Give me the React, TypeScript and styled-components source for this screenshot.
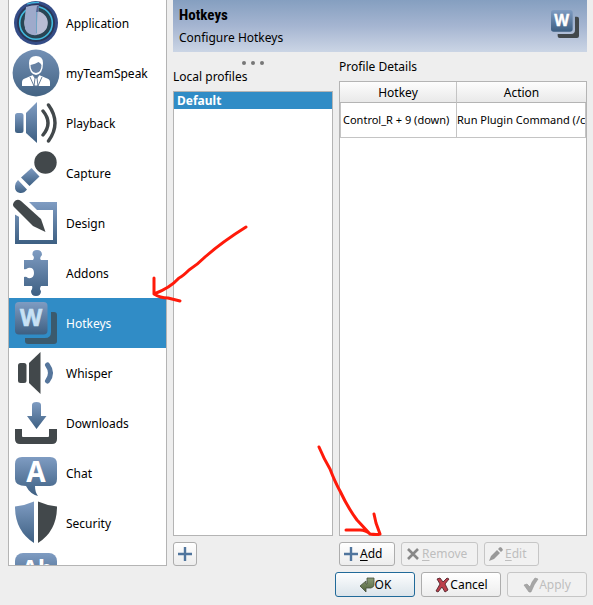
import React from "react";
import styled, { createGlobalStyle, css } from "styled-components";

const GlobalStyle = createGlobalStyle`
  *, *::before, *::after { box-sizing: border-box; }
  body {
    margin: 0;
    background: #eeeeee;
    color: #000000;
    font: 12px/18px "Noto Sans", sans-serif;
    overflow: hidden;
  }
  button { font: inherit; color: inherit; }
`;

const Dialog = styled.div`
  position: relative;
  display: flex;
  flex-direction: column;
  gap: 6px;
  height: 100vh;
  padding: 0 6px 8px 8px;
`;

const Body = styled.div`
  display: flex;
  flex: 1;
  gap: 6px;
  min-height: 0;
`;

const Sidebar = styled.nav`
  flex: 0 0 159px;
  overflow: hidden;
  background: #ffffff;
  border: 1px solid #b4b4b4;
  border-top: 0;
`;

const NavList = styled.ul`
  list-style: none;
  margin: -2px 0 0;
  padding: 0;
`;

const NavButton = styled.button<{ $active?: boolean }>`
  display: flex;
  align-items: center;
  gap: 6px;
  width: 100%;
  height: 50px;
  padding: 0 3px;
  border: 0;
  text-align: left;
  background: ${(p) => (p.$active ? "#308cc6" : "transparent")};
  color: ${(p) => (p.$active ? "#ffffff" : "#000000")};
`;

const NavLabel = styled.span`
  padding-top: 2px;
`;

const NavIcon = styled.svg`
  flex: none;
  width: 48px;
  height: 48px;
`;

const Main = styled.main`
  display: flex;
  flex-direction: column;
  flex: 1;
  min-width: 0;
`;

const Banner = styled.header`
  display: flex;
  justify-content: space-between;
  height: 52px;
  padding: 4px 6px;
  background: linear-gradient(#859fc0, #a5b5d1 50%, #cbd5e5);
`;

const Title = styled.h1`
  margin: 0;
  font: bold 15px/22px "Roboto Condensed", Roboto, sans-serif;
`;

const Subtitle = styled.p`
  margin: 3px 0 0;
`;

const BannerIcon = styled.svg`
  width: 32px;
  height: 32px;
  margin-top: 4px;
`;

const Panels = styled.div`
  display: flex;
  flex: 1;
  gap: 6px;
  min-height: 0;
`;

const Profiles = styled.section`
  display: flex;
  flex-direction: column;
  flex: 0 0 160px;
`;

const Details = styled.section`
  display: flex;
  flex-direction: column;
  flex: 1;
  min-width: 0;
  padding-top: 6px;
`;

const Handle = styled.svg`
  align-self: center;
  width: 24px;
  height: 6px;
  margin: 8px 0 2px;
`;

const PanelLabel = styled.h2`
  margin: 0 0 5px;
  font: inherit;
`;

const ProfileList = styled.ul`
  flex: 1;
  margin: 0 0 6px;
  padding: 0;
  list-style: none;
  background: #ffffff;
  border: 1px solid #b4b4b4;
`;

const ProfileItem = styled.button`
  display: block;
  width: 100%;
  height: 17px;
  padding: 0 3px;
  border: 0;
  background: #308cc6;
  color: #ffffff;
  font-weight: bold;
  line-height: 17px;
  text-align: left;
`;

const TableFrame = styled.div`
  flex: 1;
  min-height: 0;
  margin-bottom: 6px;
  overflow: hidden;
  background: #ffffff;
  border: 1px solid #b4b4b4;
`;

const Table = styled.table`
  width: 100%;
  table-layout: fixed;
  border-collapse: separate;
  border-spacing: 0;
  white-space: nowrap;
`;

const HeadCell = styled.th`
  height: 21px;
  padding: 2px 0 0;
  font-weight: normal;
  background: linear-gradient(#fdfdfd, #e9e9e9);
  border-bottom: 1px solid #b4b4b4;
  &:first-child { width: 117px; border-right: 1px solid #c4c4c4; }
`;

const Cell = styled.td`
  height: 35px;
  padding: 0;
  overflow: hidden;
  font-size: 11px;
  border-right: 1px solid #c4c4c4;
  border-bottom: 1px solid #c4c4c4;
  &:first-child { padding-left: 2px; border-left: 1px solid #c4c4c4; }
`;

const Actions = styled.div`
  display: flex;
  gap: 6px;
`;

const Footer = styled(Actions)`
  justify-content: flex-end;
`;

const ActionButton = styled.button<{ $width: number; $dialog?: boolean; $primary?: boolean }>`
  display: flex;
  align-items: center;
  gap: 1px;
  width: ${(p) => p.$width}px;
  height: 24px;
  padding: 0 3px;
  border: 1px solid #adadad;
  border-radius: 3px;
  background: linear-gradient(#ffffff, #ededed);
  white-space: nowrap;
  ${(p) => p.$dialog && css`
    justify-content: center;
    gap: 0;
    height: 25px;
  `}
  ${(p) => p.$primary && css`
    border-color: #216a99;
    background: linear-gradient(#fcfdfe, #dbe4ea);
  `}
  &:disabled {
    color: #bebebe;
    border-color: #c6c6c6;
    background: #f1f1f1;
  }
`;

const Mnemonic = styled.span`
  text-decoration: underline;
  text-underline-offset: 2px;
`;

const ButtonIcon = styled.svg`
  flex: none;
  width: 16px;
  height: 16px;
`;

const Annotation = styled.svg<{ $x: number; $y: number }>`
  position: absolute;
  left: ${(p) => p.$x}px;
  top: ${(p) => p.$y}px;
  pointer-events: none;
  fill: none;
  stroke: #ff1a0a;
  stroke-width: 3;
  stroke-linecap: round;
  stroke-linejoin: round;
`;

const BLUE = "url(#steel)";
const DARK = "#42484b";

const Gradients = () => (
  <defs>
    <linearGradient id="steel" x1="0" y1="0" x2="0" y2="1">
      <stop offset="0" stopColor="#7f9cc2" />
      <stop offset="1" stopColor="#3d5f82" />
    </linearGradient>
    <linearGradient id="disc" x1="0" y1="0" x2="0" y2="1">
      <stop offset="0" stopColor="#7390b5" />
      <stop offset="1" stopColor="#436383" />
    </linearGradient>
    <linearGradient id="leaf" x1="0" y1="0" x2="0" y2="1">
      <stop offset="0" stopColor="#8c9c77" />
      <stop offset="1" stopColor="#4e623b" />
    </linearGradient>
  </defs>
);

const KeyDrawing = ({ back = DARK, letter = "#ffffff" }) => (
  <>
    <path d="M39 13h3q3 0 3 3v26q0 3-3 3H16q-3 0-3-3v-3h20q6 0 6-6z" fill={back} />
    <rect x="3" y="3" width="32.500" height="32.500" rx="4" fill={BLUE} />
    <text x="19" y="27" textAnchor="middle" fontFamily="Noto Sans, sans-serif" fontWeight="700" fontSize="23" fill={letter} stroke={letter} strokeWidth=".6">W</text>
  </>
);

const drawings: Record<string, React.ReactNode> = {
  Application: (
    <>
      <circle cx="24" cy="24" r="22" fill="#344c86" />
      <circle cx="24" cy="24" r="19" fill="#2a3656" />
      <circle cx="24" cy="24" r="16.3" fill="#294554" stroke="#42bce0" strokeWidth="1.6" />
      <circle cx="24" cy="24" r="11.8" fill="#b8bdd4" />
      <path d="M14 8q5-2 13-2l-2 18v12q-9 1-12-6-1-11 1-22z" fill="#9eaacb" />
      <path d="M25 7l2-1-1 7h-2z" fill="#536492" />
      <path d="M24.5 13v21" stroke="#70a4c4" />
      <path d="M15 5q6-2 12-1.5" fill="none" stroke="#42bce0" strokeWidth="1.2" />
    </>
  ),
  myTeamSpeak: (
    <>
      <circle cx="24" cy="24" r="23.4" fill="url(#disc)" />
      <path d="M10 37v-4q0-3 4-4l7-3 3 4 3-4 7 3q4 1 4 4v4z" fill="#fff" />
      <path d="M21 26l2 3-1 8h4l-1-8 2-3M18 28l4 9M30 28l-4 9" fill="none" stroke="#55718f" strokeWidth=".9" />
      <path d="M17 14q0-7 7-7t7 7q0 11-7 12-7-1-7-12z" fill="#fff" />
      <path d="M18.500 16q5-1 8-3 2 1 3 3 0 7-5.500 8-5.500-1-5.500-8z" fill="#6681a3" />
    </>
  ),
  Playback: (
    <>
      <rect x="3" y="14" width="8.500" height="20" rx="2.500" fill={BLUE} />
      <path d="M14 14L25 3v41L14 34z" fill={BLUE} />
      <path d="M31 12q10 12 0 24M36.500 6q13 18 0 36" fill="none" stroke={DARK} strokeWidth="3.400" strokeLinecap="round" />
    </>
  ),
  Capture: (
    <>
      <circle cx="33.500" cy="13.500" r="11.200" fill={DARK} />
      <path d="M19.500 19l8 8.500L17.500 37l-8.500-8.500z" fill={BLUE} />
      <path d="M6 31l9 9.500q-3 4-7 3.500-5.500-1-5-7 0-3 3-6z" fill={BLUE} />
    </>
  ),
  Design: (
    <>
      <path fillRule="evenodd" d="M3 3h42v42H3zM7 11v30h34V11z" fill={BLUE} />
      <path d="M2 2h14l15 15v12l-8-2L2 15z" fill="#fff" />
      <path d="M2 3q3-4 7-1l20 18 4.500 13-12.500-6L2 8q-2-2 0-5z" fill={DARK} />
    </>
  ),
  Addons: (
    <path d="M12 11h9q2-3-.500-5Q20 1 25 1t5 5q-3 3-1 5h7v26h-7q-2 3 0 5 0 5-5 5t-5-5q2-3 1-5h-8v-9q2-1 4 1 6 1 6-5t-6-5q-3 2-4 1z" fill={BLUE} />
  ),
  Hotkeys: <KeyDrawing back="#3b5a6d" letter="#c7e1f5" />,
  Whisper: (
    <>
      <rect x="6" y="14" width="8.500" height="20" rx="2.500" fill={DARK} />
      <path d="M17 14L28.500 3v42L17 34z" fill={DARK} />
      <path d="M35.500 16q6 8 0 16" fill="none" stroke="#56769c" strokeWidth="5" strokeLinecap="round" />
    </>
  ),
  Downloads: (
    <>
      <path d="M20 6q0-3 4.500-3T29 6v11h5.500L24.500 30 15 17h5z" fill={BLUE} />
      <path d="M3 30h7v7q0 1 1 1h25q1 0 1-1v-7h8v10q0 5-5 5H8q-5 0-5-5z" fill={DARK} />
    </>
  ),
  Chat: (
    <>
      <path d="M10 8h28q7 0 7 7v15q0 7-7 7H23q0 6 3 10-8-2-12-10-11 0-11-7V15q0-7 7-7z" fill={BLUE} />
      <text x="24" y="33" textAnchor="middle" fontFamily="Noto Sans, sans-serif" fontWeight="700" fontSize="28" fill="#fff">A</text>
    </>
  ),
  Security: (
    <>
      <path d="M3 7.500q10-1 19-5V44Q3 32 3 7.500z" fill={BLUE} />
      <path d="M45 7.500q-10-1-19-5V44Q45 32 45 7.500z" fill={DARK} />
    </>
  ),
  Notifications: (
    <>
      <rect x="3" y="4" width="42" height="36" rx="8" fill={BLUE} />
      <text x="10" y="28" fontFamily="Noto Sans, sans-serif" fontWeight="700" fontSize="23" fill="#fff">Ab</text>
    </>
  ),
};

const PlusIcon = () => (
  <ButtonIcon viewBox="0 0 16 16" aria-hidden="true">
    <path d="M8 1v14M1 8h14" stroke="#50759d" strokeWidth="2.4" />
  </ButtonIcon>
);
const RemoveIcon = () => (
  <ButtonIcon viewBox="0 0 16 16" aria-hidden="true">
    <path d="M3 3l10 10M13 3L3 13" stroke="#888" strokeWidth="2.6" />
  </ButtonIcon>
);
const EditIcon = () => (
  <ButtonIcon viewBox="0 0 16 16" aria-hidden="true">
    <path d="M1 15l2-5 6-6 3 3-6 6zM10 3l2-2q2 0 3 3l-2 2z" fill="#999" />
  </ButtonIcon>
);
const OkIcon = () => (
  <ButtonIcon viewBox="0 0 16 16" aria-hidden="true">
    <path d="M8 1h7v7q0 2-3 3H7v4L1 9l6-5v3h1z" fill="url(#leaf)" stroke="#46513d" strokeWidth=".8" />
  </ButtonIcon>
);
const CancelIcon = () => (
  <ButtonIcon viewBox="0 0 16 16" aria-hidden="true">
    <path d="M3 2l3-1 3 4 4-4 2 1-4 5 3 6-3 2-3-5-4 5-2-1 4-7z" fill="#bd3f4b" stroke="#54252c" strokeWidth=".9" />
  </ButtonIcon>
);
const ApplyIcon = () => (
  <ButtonIcon viewBox="0 0 16 16" aria-hidden="true">
    <path d="M1 8l3-1 3 3q2-6 5-9l3 1q-4 5-7 13H6z" fill="#a6a6a6" stroke="#959595" strokeWidth=".6" />
  </ButtonIcon>
);

export default function App() {
  return (
    <Dialog>
      <GlobalStyle />
      <Body>
        <Sidebar aria-label="Settings">
          <NavList>
            {Object.entries(drawings).map(([name, drawing]) => (
              <li key={name}>
                <NavButton
                  $active={name === "Hotkeys"}
                  aria-label={name}
                  aria-current={name === "Hotkeys" ? "page" : undefined}
                >
                  <NavIcon viewBox="0 0 48 48" aria-hidden="true">
                    <Gradients />
                    {drawing}
                  </NavIcon>
                  {name !== "Notifications" && <NavLabel>{name}</NavLabel>}
                </NavButton>
              </li>
            ))}
          </NavList>
        </Sidebar>
        <Main>
          <Banner>
            <div>
              <Title>Hotkeys</Title>
              <Subtitle>Configure Hotkeys</Subtitle>
            </div>
            <BannerIcon viewBox="0 0 48 48" aria-hidden="true">
              <KeyDrawing />
            </BannerIcon>
          </Banner>
          <Panels>
            <Profiles>
              <Handle viewBox="0 0 24 6" fill="#777777" aria-hidden="true">
                <circle cx="3" cy="3" r="2" />
                <circle cx="12" cy="3" r="2" />
                <circle cx="21" cy="3" r="2" />
              </Handle>
              <PanelLabel>Local profiles</PanelLabel>
              <ProfileList>
                <li><ProfileItem>Default</ProfileItem></li>
              </ProfileList>
              <ActionButton $width={24} aria-label="Add profile"><PlusIcon /></ActionButton>
            </Profiles>
            <Details>
              <PanelLabel>Profile Details</PanelLabel>
              <TableFrame>
                <Table>
                  <thead>
                    <tr><HeadCell>Hotkey</HeadCell><HeadCell>Action</HeadCell></tr>
                  </thead>
                  <tbody>
                    <tr><Cell>Control_R + 9 (down)</Cell><Cell>Run Plugin Command (/c</Cell></tr>
                  </tbody>
                </Table>
              </TableFrame>
              <Actions>
                <ActionButton $width={56}><PlusIcon /><span><Mnemonic>A</Mnemonic>dd</span></ActionButton>
                <ActionButton $width={77} disabled><RemoveIcon /><span><Mnemonic>R</Mnemonic>emove</span></ActionButton>
                <ActionButton $width={55} disabled><EditIcon /><span><Mnemonic>E</Mnemonic>dit</span></ActionButton>
              </Actions>
            </Details>
          </Panels>
        </Main>
      </Body>
      <Footer>
        <ActionButton $width={80} $dialog $primary><OkIcon />OK</ActionButton>
        <ActionButton $width={80} $dialog><CancelIcon />Cancel</ActionButton>
        <ActionButton $width={80} $dialog disabled><ApplyIcon />Apply</ActionButton>
      </Footer>
      <Annotation $x={148} $y={220} width="104" height="86" aria-hidden="true">
        <path d="M98 7Q74 22 57 37Q49 45 41 50Q35 56 31 58Q22 68 6 74M6 58V74Q12 78 20 78L32 81" />
      </Annotation>
      <Annotation $x={312} $y={440} width="74" height="98" aria-hidden="true">
        <path d="M7 7Q12 19 18 29Q23 42 28 51Q36 68 45 80L58 94M34 90H48Q54 90 58 94Q65 95 68 94L64 83L62 74" />
      </Annotation>
    </Dialog>
  );
}
